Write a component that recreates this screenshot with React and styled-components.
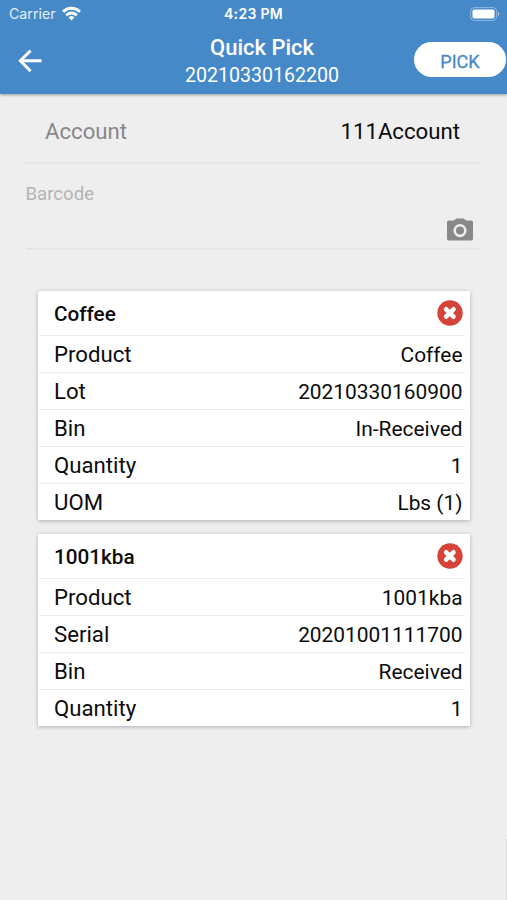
import React from "react";
import styled, { createGlobalStyle } from "styled-components";

const items = [
  {
    title: "Coffee",
    rows: [
      ["Product", "Coffee"],
      ["Lot", "20210330160900"],
      ["Bin", "In-Received"],
      ["Quantity", "1"],
      ["UOM", "Lbs (1)"],
    ],
  },
  {
    title: "1001kba",
    rows: [
      ["Product", "1001kba"],
      ["Serial", "20201001111700"],
      ["Bin", "Received"],
      ["Quantity", "1"],
    ],
  },
];

const WifiIcon = () => (
  <svg width="19" height="15" viewBox="0 0 19 15">
    <g fill="none" stroke="#fff" strokeWidth="2.9">
      <path d="M1.1 5.7a11.9 11.9 0 0 1 16.8 0" />
      <path d="M4.2 9.2a7.5 7.5 0 0 1 10.6 0" />
    </g>
    <path d="M9.5 14.6l-2.9-3.1a4.1 4.1 0 0 1 5.8 0z" fill="#fff" />
  </svg>
);

const BatteryIcon = () => (
  <svg width="30" height="14" viewBox="0 0 30 14">
    <rect
      x="0.6"
      y="0.6"
      width="26"
      height="12.8"
      rx="3.6"
      fill="none"
      stroke="#fff"
      strokeOpacity="0.4"
    />
    <rect x="2.5" y="2.5" width="22" height="9" rx="1.8" fill="#fff" />
    <path d="M28 4.8c1.8.8 1.8 3.6 0 4.4z" fill="#fff" fillOpacity="0.5" />
  </svg>
);

const BackIcon = () => (
  <svg width="24" height="24" viewBox="0 0 24 24">
    <path
      d="M12.6 1.6L2.3 11.8l10.3 10.3M2.6 11.8H23.6"
      fill="none"
      stroke="#fff"
      strokeWidth="2.9"
    />
  </svg>
);

const CameraIcon = () => (
  <svg width="26" height="23" viewBox="0 0 26 23">
    <path
      fill="#888"
      fillRule="evenodd"
      d="M9.2 0.4h7.6l2.2 2h5.2A1.8 1.8 0 0 1 26 4.2v16.6a1.8 1.8 0 0 1-1.8 1.8H1.8A1.8 1.8 0 0 1 0 20.8V4.2a1.8 1.8 0 0 1 1.8-1.8H7zM13 6a6.6 6.6 0 1 0 0 13.2A6.6 6.6 0 1 0 13 6z"
    />
    <circle cx="13" cy="12.6" r="4" fill="#888" />
  </svg>
);

const RemoveIcon = () => (
  <svg width="26" height="26" viewBox="0 0 26 26">
    <circle cx="13" cy="13" r="12.7" fill="#d64338" />
    <path
      d="M9.1 9.3l7.4 7.4M16.5 9.3l-7.4 7.4"
      stroke="#fff"
      strokeWidth="4.6"
      strokeLinecap="round"
    />
  </svg>
);

const App = () => {
  return (
    <Screen>
      <GlobalStyle />
      <Header>
        <StatusBar>
          <Carrier>
            Carrier <WifiIcon />
          </Carrier>
          <Clock>4:23 PM</Clock>
          <Battery>
            <BatteryIcon />
          </Battery>
        </StatusBar>
        <Toolbar>
          <BackButton aria-label="Back">
            <BackIcon />
          </BackButton>
          <Heading>
            <h1>Quick Pick</h1>
            <p>20210330162200</p>
          </Heading>
          <PickButton>PICK</PickButton>
        </Toolbar>
      </Header>
      <Account>
        <span>Account</span>
        <strong>111Account</strong>
      </Account>
      <Barcode>
        <label>Barcode</label>
        <CameraIcon />
      </Barcode>
      <List>
        {items.map((item) => (
          <Card key={item.title}>
            <CardHeader>
              <h2>{item.title}</h2>
              <RemoveButton aria-label="Remove">
                <RemoveIcon />
              </RemoveButton>
            </CardHeader>
            {item.rows.map(([label, value]) => (
              <Row key={label}>
                <Label>{label}</Label>
                <Value>{value}</Value>
              </Row>
            ))}
          </Card>
        ))}
      </List>
      <ScrollThumb />
    </Screen>
  );
};

const GlobalStyle = createGlobalStyle`
  * {
    margin: 0;
    padding: 0;
    box-sizing: border-box;
  }
  body {
    background: #eeeeee;
    font-family: Roboto, sans-serif;
    color: #0c0c0c;
  }
  button {
    border: none;
    background: none;
    font-family: inherit;
  }
  svg {
    display: block;
  }
`;

const Screen = styled.div`
  position: relative;
  height: 900px;
  overflow: hidden;
`;

const Header = styled.header`
  height: 94px;
  background: #4689c8;
  color: #fff;
  box-shadow: 0 1px 3px rgba(0, 0, 0, 0.35);
`;

const StatusBar = styled.div`
  display: grid;
  grid-template-columns: 1fr auto 1fr;
  align-items: center;
  height: 28px;
  padding: 0 7px 1px 9px;
`;

const Carrier = styled.div`
  display: flex;
  align-items: center;
  gap: 6px;
  font-family: Inter, sans-serif;
  font-size: 14.2px;
  color: #e4effa;
  svg {
    margin-top: -1px;
  }
`;

const Clock = styled.div`
  margin-right: 2px;
  font-family: Inter, sans-serif;
  font-size: 14px;
  font-weight: 600;
  letter-spacing: 0.3px;
`;

const Battery = styled.div`
  display: flex;
  justify-content: flex-end;
`;

const Toolbar = styled.div`
  display: grid;
  grid-template-columns: 110px 1fr 110px;
  height: 66px;
`;

const BackButton = styled.button`
  width: 24px;
  height: 24px;
  margin: 21px 0 0 18px;
`;

const Heading = styled.div`
  padding: 6px 0 0 17px;
  text-align: center;
  h1 {
    font-size: 22px;
    font-weight: 500;
    line-height: 27px;
  }
  p {
    font-size: 19.6px;
    line-height: 30px;
  }
`;

const PickButton = styled.button`
  width: 92px;
  height: 35px;
  margin: 14px 0 0 17px;
  padding-top: 3px;
  border-radius: 18px;
  background: #fff;
  color: #4689c8;
  font-size: 18px;
  -webkit-text-stroke: 0.3px;
`;

const Account = styled.div`
  display: flex;
  justify-content: space-between;
  height: 70px;
  margin: 0 25px 0 24px;
  padding: 23px 22px 0 21px;
  border-bottom: 2px solid #e7e7e7;
  font-size: 22.2px;
  line-height: 28px;
  span {
    color: #888;
  }
  strong {
    font-weight: 400;
    color: #0c0c0c;
  }
`;

const Barcode = styled.div`
  display: flex;
  justify-content: space-between;
  height: 86px;
  margin: 0 26px 0 25.5px;
  border-bottom: 2px solid #e4e4e4;
  label {
    margin-top: 18px;
    font-size: 18.6px;
    line-height: 24px;
    color: #b4b4b4;
  }
  svg {
    margin: 54px 8.5px 0 0;
  }
`;

const List = styled.main`
  display: flex;
  flex-direction: column;
  gap: 14px;
  padding: 41.4px 37px 0 38px;
`;

const Card = styled.section`
  background: #fff;
  border-radius: 1px;
  box-shadow: 0 1px 4px rgba(0, 0, 0, 0.27);
`;

const CardHeader = styled.div`
  display: flex;
  align-items: center;
  justify-content: space-between;
  height: 43.4px;
  padding: 2px 7px 0 16px;
  h2 {
    font-size: 20.7px;
    font-weight: 500;
    line-height: 28px;
  }
`;

const RemoveButton = styled.button`
  width: 26px;
  height: 26px;
  margin-top: -2.4px;
`;

const Row = styled.div`
  display: flex;
  align-items: center;
  justify-content: space-between;
  height: 37.1px;
  margin: 0 5px 0 1px;
  padding: 2px 2.5px 0 15px;
  border-top: 1px solid #ececec;
`;

const Label = styled.span`
  padding-bottom: 2px;
  font-size: 22.2px;
  line-height: 28px;
`;

const Value = styled.span`
  font-size: 20.9px;
  line-height: 28px;
`;

const ScrollThumb = styled.div`
  position: absolute;
  right: 0;
  bottom: 0;
  width: 1px;
  height: 61px;
  background: #dcdcdc;
`;

export default App;
